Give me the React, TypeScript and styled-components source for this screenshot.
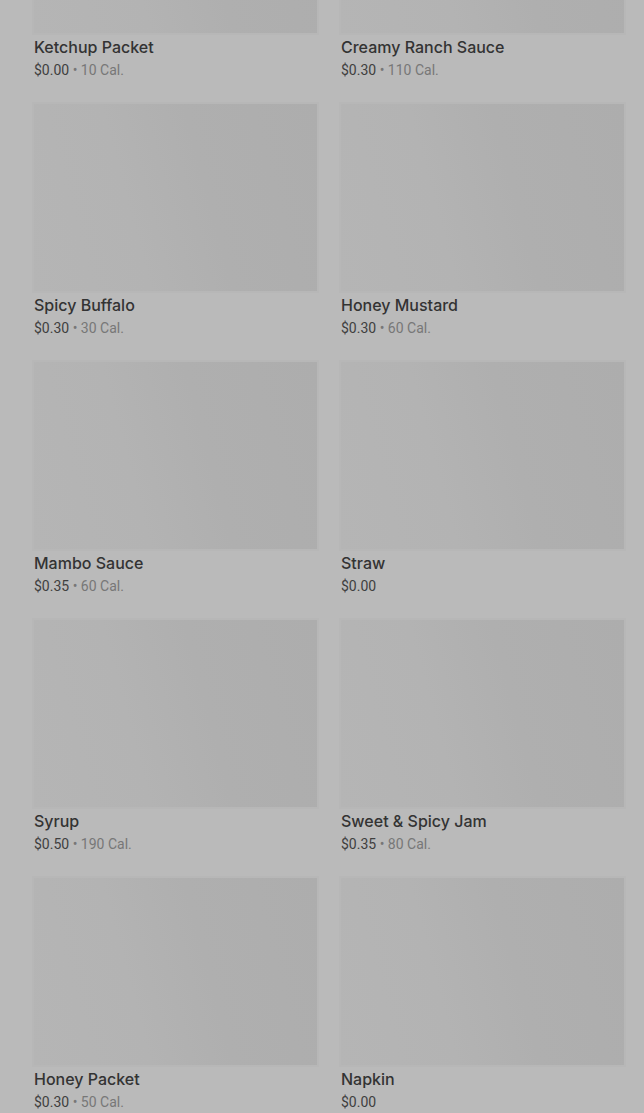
import { createGlobalStyle, styled } from "styled-components";

const GlobalStyle = createGlobalStyle`
  html, body {
    margin: 0;
    padding: 0;
    background: #bababa;
    font-family: Inter, Roboto, "Liberation Sans", sans-serif;
  }
`;

const Page = styled.div`
  height: 1113px;
  overflow: hidden;
  background: #bababa;
`;

const Grid = styled.div`
  margin-top: -154px;
  padding: 0 20px 0 34px;
  display: grid;
  grid-template-columns: 1fr 1fr;
  column-gap: 24px;
  row-gap: 22px;
`;

const Card = styled.div`
  display: flex;
  flex-direction: column;
`;

const Thumb = styled.div`
  height: 187px;
  background: linear-gradient(
    75deg,
    #b5b5b5 0%,
    #b3b3b3 35%,
    #afafaf 60%,
    #adadad 100%
  );
  box-shadow: 0 0 0 2px #b7b7b7;
`;

const Title = styled.div`
  margin-top: 3px;
  font-size: 16px;
  line-height: 22px;
  font-weight: 500;
  color: #333333;
`;

const Meta = styled.div`
  font-family: Roboto, "Liberation Sans", sans-serif;
  font-size: 14px;
  line-height: 24px;
  color: #3f3f3f;
`;

const Cal = styled.span`
  color: #777777;
`;

const items = [
  { name: "Ketchup Packet", price: "$0.00", cal: "10 Cal." },
  { name: "Creamy Ranch Sauce", price: "$0.30", cal: "110 Cal." },
  { name: "Spicy Buffalo", price: "$0.30", cal: "30 Cal." },
  { name: "Honey Mustard", price: "$0.30", cal: "60 Cal." },
  { name: "Mambo Sauce", price: "$0.35", cal: "60 Cal." },
  { name: "Straw", price: "$0.00" },
  { name: "Syrup", price: "$0.50", cal: "190 Cal." },
  { name: "Sweet & Spicy Jam", price: "$0.35", cal: "80 Cal." },
  { name: "Honey Packet", price: "$0.30", cal: "50 Cal." },
  { name: "Napkin", price: "$0.00" },
];

export default function App() {
  return (
    <Page>
      <GlobalStyle />
      <Grid>
        {items.map((it) => (
          <Card key={it.name}>
            <Thumb />
            <Title>{it.name}</Title>
            <Meta>
              {it.price}
              {it.cal && <Cal> • {it.cal}</Cal>}
            </Meta>
          </Card>
        ))}
      </Grid>
    </Page>
  );
}
